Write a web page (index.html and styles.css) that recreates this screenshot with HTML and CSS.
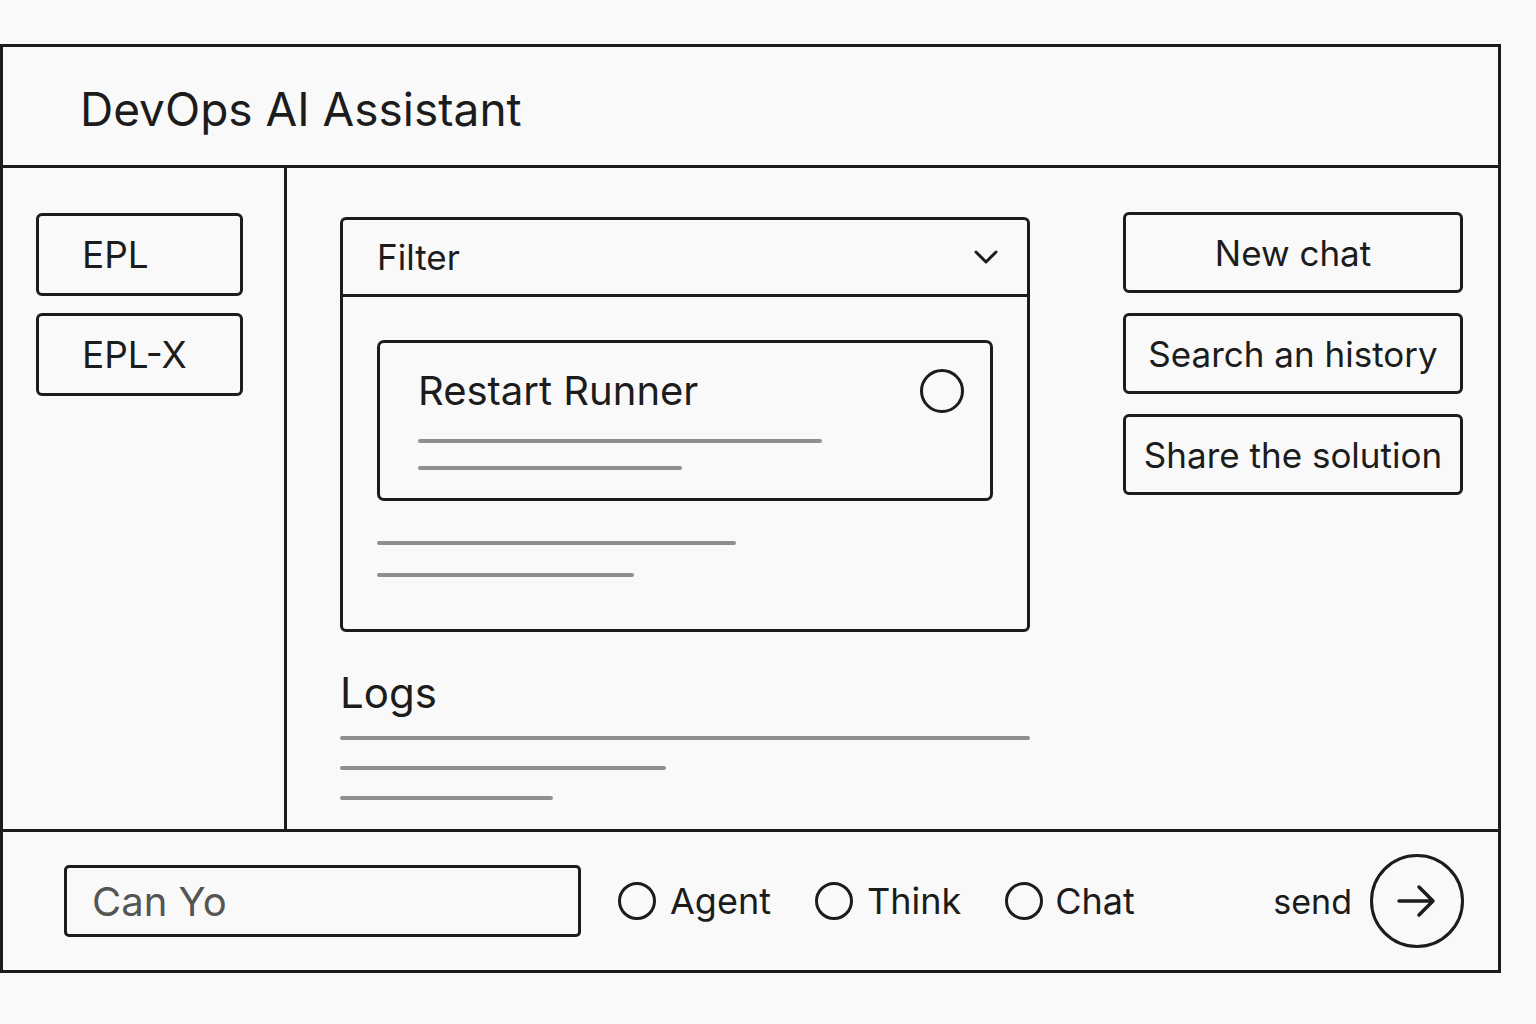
FILE: index.html
```html
<!DOCTYPE html>
<html lang="en">
<head>
  <meta charset="UTF-8">
  <title>DevOps AI Assistant</title>
  <link rel="stylesheet" href="styles.css">
</head>
<body>
  <div class="app">
    <!-- Top bar -->
    <header class="app-header">
      <h1 class="app-title">DevOps AI Assistant</h1>
    </header>

    <div class="app-body">
      <!-- Project list -->
      <aside class="sidebar">
        <button class="box-button project">EPL</button>
        <button class="box-button project">EPL-X</button>
      </aside>

      <main class="main">
        <div class="center-column">
          <!-- Filter panel -->
          <div class="filter-card">
            <div class="filter-head">
              <span class="filter-label">Filter</span>
              <svg class="chevron" width="26" height="16" viewBox="0 0 26 16">
                <path d="M3 3 L13 13 L23 3" fill="none" stroke="#1c1c1c" stroke-width="3" stroke-linecap="round" stroke-linejoin="round"/>
              </svg>
            </div>
            <div class="filter-body">
              <div class="action-card">
                <div class="action-top">
                  <span class="action-title">Restart Runner</span>
                  <span class="radio large"></span>
                </div>
                <div class="line" style="width: 404px"></div>
                <div class="line" style="width: 264px"></div>
              </div>
              <div class="loose-lines">
                <div class="line" style="width: 359px"></div>
                <div class="line" style="width: 257px"></div>
              </div>
            </div>
          </div>

          <!-- Logs -->
          <section class="logs">
            <h2 class="logs-title">Logs</h2>
            <div class="line" style="width: 690px"></div>
            <div class="line" style="width: 326px"></div>
            <div class="line" style="width: 213px"></div>
          </section>
        </div>

        <!-- Actions -->
        <div class="actions">
          <button class="box-button action">New chat</button>
          <button class="box-button action">Search an history</button>
          <button class="box-button action">Share the solution</button>
        </div>
      </main>
    </div>

    <!-- Prompt bar -->
    <footer class="prompt-bar">
      <div class="prompt-input">Can Yo</div>
      <div class="modes">
        <label class="mode"><span class="radio"></span>Agent</label>
        <label class="mode"><span class="radio"></span>Think</label>
        <label class="mode"><span class="radio"></span>Chat</label>
      </div>
      <div class="send">
        <span class="send-label">send</span>
        <span class="send-button">
          <svg width="44" height="36" viewBox="0 0 44 36">
            <path d="M4 18 H38 M24 4 L38 18 L24 32" fill="none" stroke="#1c1c1c" stroke-width="3.5" stroke-linecap="round" stroke-linejoin="round"/>
          </svg>
        </span>
      </div>
    </footer>
  </div>
</body>
</html>
```

FILE: styles.css
```css
body {
  margin: 0;
  padding-top: 44px;
  background-color: #f9f9f9;
  color: #1c1c1c;
  font-family: Inter, 'Liberation Sans', sans-serif;
}

.app {
  box-sizing: border-box;
  width: 1501px;
  height: 929px;
  border: 3px solid #1c1c1c;
  display: flex;
  flex-direction: column;
}

/* Header */
.app-header {
  height: 118px;
  border-bottom: 3px solid #1c1c1c;
  display: flex;
  align-items: center;
  padding: 6px 0 0 77px;
  box-sizing: border-box;
  height: 121px;
}

.app-title {
  margin: 0;
  font-size: 46px;
  font-weight: 400;
}

/* Body */
.app-body {
  flex: 1;
  display: flex;
  min-height: 0;
}

.sidebar {
  box-sizing: border-box;
  width: 284px;
  border-right: 3px solid #1c1c1c;
  padding: 45px 0 0 33px;
  display: flex;
  flex-direction: column;
  gap: 17px;
}

.box-button {
  box-sizing: border-box;
  background: transparent;
  border: 3px solid #1c1c1c;
  border-radius: 6px;
  color: #1c1c1c;
  font-family: inherit;
  cursor: pointer;
}

.project {
  width: 207px;
  height: 83px;
  text-align: left;
  padding-left: 43px;
  font-size: 37px;
}

.main {
  flex: 1;
  display: flex;
  padding: 49px 35px 0 53px;
}

.center-column {
  width: 690px;
}

/* Filter panel */
.filter-card {
  box-sizing: border-box;
  height: 415px;
  border: 3px solid #1c1c1c;
  border-radius: 6px;
}

.filter-head {
  height: 74px;
  border-bottom: 3px solid #1c1c1c;
  display: flex;
  align-items: center;
  justify-content: space-between;
  padding: 0 28px 0 34px;
}

.filter-label {
  font-size: 35px;
}

.filter-body {
  padding: 43px 34px 0 34px;
}

.action-card {
  box-sizing: border-box;
  height: 161px;
  border: 3px solid #1c1c1c;
  border-radius: 7px;
  padding: 23px 26px 0 38px;
}

.action-top {
  display: flex;
  justify-content: space-between;
  align-items: center;
  margin-bottom: 24px;
}

.action-title {
  font-size: 40px;
}

.line {
  height: 4px;
  border-radius: 2px;
  background-color: #8f8f8f;
  margin-bottom: 23px;
}

.loose-lines {
  padding-top: 40px;
}

.loose-lines .line {
  margin-bottom: 28px;
}

/* Logs */
.logs {
  padding-top: 36px;
}

.logs-title {
  margin: 0 0 18px;
  font-size: 42px;
  font-weight: 400;
  line-height: 1.2;
}

.logs .line {
  margin-bottom: 26px;
}

/* Actions */
.actions {
  margin-left: auto;
  margin-top: -5px;
  width: 340px;
  display: flex;
  flex-direction: column;
  gap: 20px;
}

.action {
  height: 81px;
  font-size: 35px;
  text-align: center;
  padding: 0;
}

/* Radios */
.radio {
  box-sizing: border-box;
  display: inline-block;
  width: 38px;
  height: 38px;
  border: 3px solid #1c1c1c;
  border-radius: 50%;
}

.radio.large {
  width: 44px;
  height: 44px;
}

/* Prompt bar */
.prompt-bar {
  height: 138px;
  border-top: 3px solid #1c1c1c;
  display: flex;
  align-items: center;
  padding: 0 34px 0 61px;
}

.prompt-input {
  box-sizing: border-box;
  width: 517px;
  height: 72px;
  border: 3px solid #1c1c1c;
  border-radius: 5px;
  padding-left: 25px;
  display: flex;
  align-items: center;
  font-size: 40px;
  color: #555;
}

.modes {
  display: flex;
  margin-left: 37px;
  gap: 44px;
}

.mode {
  display: flex;
  align-items: center;
  gap: 14px;
  font-size: 36px;
}

.mode:last-child {
  gap: 12px;
}

.send {
  margin-left: auto;
  display: flex;
  align-items: center;
  gap: 18px;
}

.send-label {
  font-size: 34px;
}

.send-button {
  box-sizing: border-box;
  width: 94px;
  height: 94px;
  border: 3px solid #1c1c1c;
  border-radius: 50%;
  display: flex;
  align-items: center;
  justify-content: center;
}
```
